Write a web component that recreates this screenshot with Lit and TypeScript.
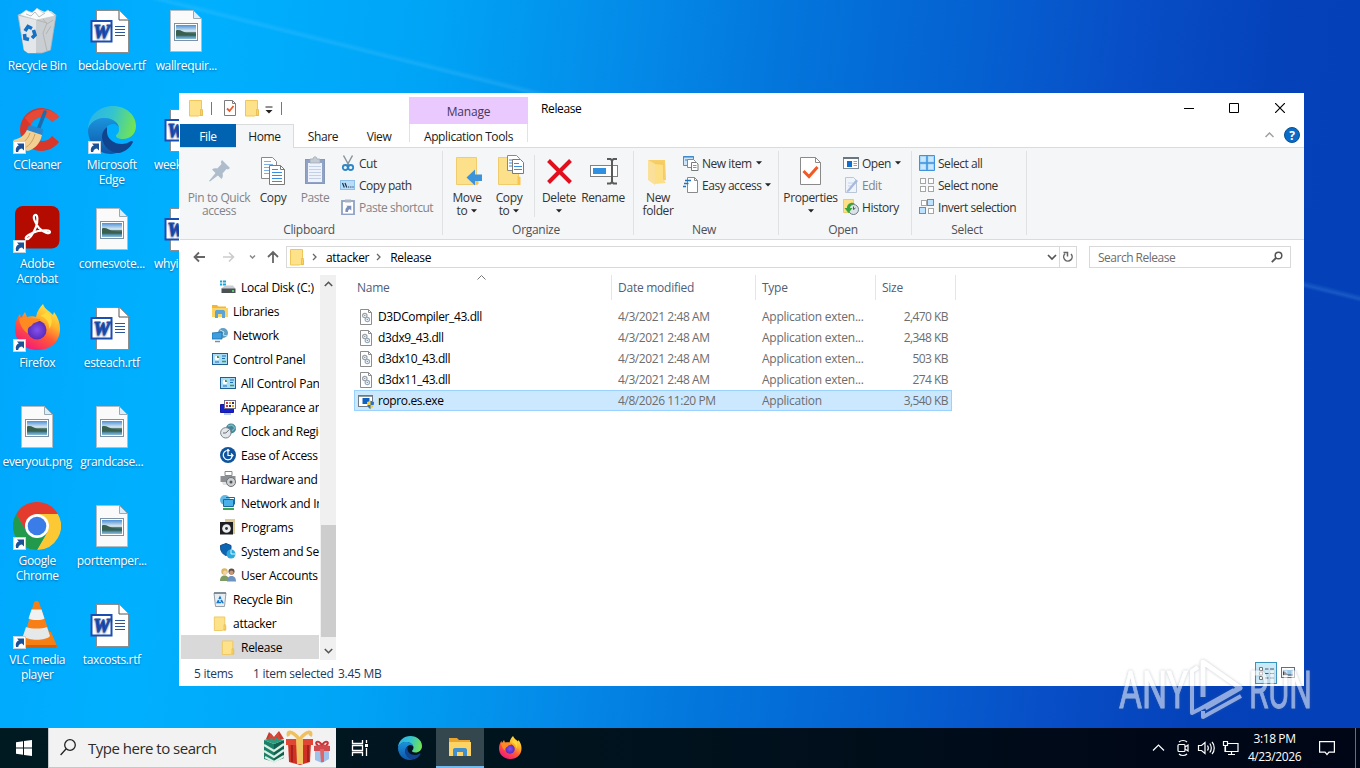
import { LitElement, html, svg, css, nothing } from 'lit'
import { customElement, property } from 'lit/decorators.js'
import { classMap } from 'lit/directives/class-map.js'

/* ---------- icons ---------- */

const pic = (w: number, h: number, body: unknown, vw = w, vh = h) => html`
  <svg width=${w} height=${h} viewBox="0 0 ${vw} ${vh}" fill="none">${body}</svg>
`

const shortcut = svg`
  <rect x="0.5" y="35.5" width="12" height="12" fill="#fff" stroke="#c9d3dc"/>
  <path d="M3 46c-.8-3.500.5-5.800 2.800-6.500L4 37.500h7v7l-2-2c-2 .2-3.500 1.200-3.800 3.500z" fill="#1b5297"/>
`

const wordFile = pic(48, 48, svg`
  <path d="M8.500 3.500h23l9 9v33h-32z" fill="#fff" stroke="#8d8d8d"/>
  <path d="M31 3.500v9.500h9.500" fill="#fff" stroke="#555"/>
  <path d="M27 19.500h10M27 22.500h10M27 25.500h10M27 28.500h10" stroke="#2b579a"/>
  <rect x="3.500" y="14" width="20" height="20.500" fill="#fff" stroke="#1c4eb1" stroke-width="2"/>
  <text x="13.500" y="30.500" text-anchor="middle" textLength="16" lengthAdjust="spacingAndGlyphs" font-family="Liberation Serif, serif" font-size="18" font-weight="700" font-style="italic" fill="#1c4eb1" stroke="#1c4eb1" stroke-width="1">W</text>
`)

const imageFile = pic(48, 48, svg`
  <defs>
    <linearGradient id="sky" x2="0" y2="1"><stop stop-color="#4d8fd6"/><stop offset=".45" stop-color="#dcebf3"/><stop offset=".55" stop-color="#4a7164"/><stop offset=".7" stop-color="#2d6478"/><stop offset="1" stop-color="#8cc0dd"/></linearGradient>
  </defs>
  <path d="M8.500 3.500h23l8 8v33h-31z" fill="#fafafa" stroke="#b4bcc1"/>
  <path d="M31.500 3.500v8h8z" fill="#d9eefa" stroke="#9aa9b2"/>
  <rect x="12.500" y="16.500" width="23" height="17" fill="#fff" stroke="#7b91a5"/>
  <rect x="14" y="18" width="20" height="14" fill="url(#sky)"/>
  <path d="M14 23.500c4-1.500 7 1.500 10 2.500l10 1.500v1H14z" fill="#39604f"/>
`)

const recycleBin = pic(48, 48, svg`
  <path d="M5 8l8-4 6 1 6-3 7 3 6-1 5 4-6 35-8 3H15l-4-3z" fill="#dfe3e6"/>
  <path d="M5 8l19 4 19-4-5.500 35-9 3H15l-4-3z" fill="#c9ced2" stroke="#aab3b9" stroke-width=".8"/>
  <path d="M6 9l17 4v33h-8l-4-3z" fill="#e4e7ea"/>
  <path d="M7 8l6-5 6 3 5-5 6 5 5-3 7 6-18 4z" fill="#fafbfb" stroke="#bcc4c9" stroke-width=".6"/>
  <path d="M13 7l5 2 4-4 4 5 6-4" stroke="#a7b0b7" stroke-width=".8"/>
  <path d="M24 13l10 3-4 10 4 18M30 12l4 5 6-4M33 27l5-8" stroke="#b5b4b0" stroke-width="1"/>
  <g stroke="#1571c4" stroke-width="3.600"><path d="M12 24l3-4.500 4 2"/><path d="M20.500 23l1.500 5-3 3"/><path d="M16 32.500l-4-1-.5-4.500"/></g>
`)

const ccleaner = pic(48, 48, svg`
  <path d="M46 11A21.500 21.500 0 1 0 46 36L39 30A12 12 0 1 1 39 16z" fill="#d8372a"/>
  <path d="M46 11A21.500 21.500 0 0 0 12 12l6 7A12 12 0 0 1 39 16z" fill="#f0563f" opacity=".6"/>
  <path d="M32 6L25 24" stroke="#1d6dad" stroke-width="3.500" stroke-linecap="round"/>
  <path d="M16 19l14 4-1 8-16-6z" fill="#2b86cb"/>
  <path d="M14 24l15 5c-2 9-8 15-15 16L0 34c6-1 11-4 14-10z" fill="#f2cf93"/>
  <path d="M17 27c-2 6-6 9-10 12M22 28c-2 7-5 11-10 14" stroke="#cf9f59"/>
  ${shortcut}
`)

const edgeBody = svg`
  <defs>
    <linearGradient id="eg1" x1="0" y1=".2" x2="1" y2=".4"><stop stop-color="#2ab3ea"/><stop offset=".5" stop-color="#34c4cf"/><stop offset="1" stop-color="#70e356"/></linearGradient>
    <linearGradient id="eg2" x1="0" y1="0" x2="0" y2="1"><stop stop-color="#1b93dc"/><stop offset="1" stop-color="#0d55a8"/></linearGradient>
  </defs>
  <path d="M0 24C0 9 12 0 25 0c13 0 23 9 23 20 0 8-6 13-13 13-5 0-7-2-7-3 0-2 3-2 3-7 0-6-7-11-14-11C8 12 1 18 0 24z" fill="url(#eg1)"/>
  <path d="M0 24c1-7 8-12 16-12 8 0 15 4 15 11 0-3-3-5-6-5-5 0-10 5-10 12 0 9 8 16 17 15-3 2-6 3-9 3C10 48 0 37 0 24z" fill="url(#eg2)"/>
  <path d="M19 21c-4 3-5 7-5 11 1 8 8 15 17 15 6-1 12-6 14-11 0-1-1-1-2-1-3 2-6 3-9 3-9 0-15-6-15-12z" fill="#10448e"/>
`

const acrobat = pic(48, 48, svg`
  <rect x="2" y="1" width="44.500" height="42.500" rx="8" fill="#b30b00"/>
  <path d="M22 10c3-1 3 6 1 12-3 7-7 13-10 12-2-2 5-6 12-8 6-1 12-1 12 1 0 3-7 0-11-4-4-5-7-12-4-13z" stroke="#fff" stroke-width="2.200"/>
  ${shortcut}
`)

const firefoxBody = svg`
  <defs>
    <linearGradient id="ff1" x1=".85" y1="0" x2=".25" y2="1"><stop stop-color="#fff04a"/><stop offset=".35" stop-color="#ffb32a"/><stop offset=".6" stop-color="#ff5a36"/><stop offset="1" stop-color="#f3137f"/></linearGradient>
    <radialGradient id="ff2"><stop stop-color="#8450f0"/><stop offset="1" stop-color="#5a2bb8"/></radialGradient>
  </defs>
  <path d="M30 0c2 6 7 7 10 11l1-3c4 5 6 11 6 17 0 12-9 21-22 21C11 46 2 37 2 25c0-7 2-11 5-15l1 4 4-6 2 5c3-1 7-1 9 0 1-6 4-10 7-13z" fill="url(#ff1)"/>
  <circle cx="24" cy="26" r="9.500" fill="url(#ff2)"/>
  <path d="M6 15c4-3 8-2 10-1l11 1c0 3-4 3-6 4-2 1-2 3-4 3.500-2 1-3 4-2 7-4-2-8-8-9-14.500z" fill="#ff8a22"/>
  <path d="M27 12c6 1 10 7 9 13 5-7 3-13-2-17z" fill="#ffd93b"/>
`

const chrome = pic(48, 48, svg`
  <path d="M24 12h20.800A24 24 0 0 1 24 48l10.400-18z" fill="#fcc934"/>
  <path d="M24 12h20.800A24 24 0 0 0 3.200 12L13.600 30z" fill="#e33b2e"/>
  <path d="M3.200 12L13.600 30 24 36l10.400-6L24 48A24 24 0 0 1 3.200 12z" fill="#239a4b"/>
  <circle cx="24" cy="24" r="12" fill="#fff"/><circle cx="24" cy="24" r="9.300" fill="#3b7de8"/>
  ${shortcut}
`)

const vlc = pic(48, 48, svg`
  <path d="M12 31h26l6 14c0 1-.500 2-2 2H8c-1 0-2-1-1.500-2z" fill="#f57f12"/>
  <path d="M10 44h34l-.6 3H8z" fill="#d95f05"/>
  <path d="M21 1.500c1-2 4-2 5 0l12 35c-3 6-23 6-27 0z" fill="#f77f15"/>
  <path d="M18.500 8.500h10l3 9c-3 2-12 2-16 0z" fill="#eff1f2"/>
  <path d="M13 26c5 2 16 2 21 0l3 9c-4 5-22 5-27 0z" fill="#e6e9ea"/>
  ${shortcut}
`)

const folder = (w = 16, h = 18) => pic(w, h, svg`
  <path d="M1.500 1.500h12v10l1 1v4h-3l-1 .5h-9z" fill="#fde28a" stroke="#efc65b"/>
  <path d="M12.500 10.500h2v6h-2z" fill="#fbd35e" stroke="#e4b84d" stroke-width=".7"/>
`, 16, 18)

const qatCheck = pic(14, 16, svg`
  <path d="M1.500.5h8l3 3v12h-11z" fill="#fff" stroke="#7c7c7c"/><path d="M9.500.5v3h3" stroke="#7c7c7c"/>
  <path d="M4 8.500l2.500 2.500 4-5" stroke="#e8592b" stroke-width="1.800"/>
`)

const caret = html`<svg class="caret" width="6" height="4" viewBox="0 0 6 4"><path d="M0 .3h6L3 3.600z" fill="#222"/></svg>`

const big = {
  pin: pic(32, 32, svg`<g transform="translate(6 5)" fill="#aebccb"><path d="M13 0l8 8-2 1.500-1.500-.5-4 4.500c.8 2 .3 4-1 5.500L3 9.500c1.500-1.300 3.500-1.600 5.300-1L12.500 4 11.800 2z"/><path d="M7 12.500l2.500 2.500L1 21.500l-1-.5z"/></g>`),
  copy: pic(32, 32, svg`
    <path d="M4.500 2.500h11l4 4v17h-15z" fill="#fff" stroke="#8a8a8a"/><path d="M7 6.500h7M7 9.500h9M7 12.500h9M7 15.500h9M7 18.500h9" stroke="#7eb0e4"/>
    <path d="M12.500 10.500h11l4 4v15h-15z" fill="#fff" stroke="#7a7a7a"/><path d="M23.500 10.500v4h4" stroke="#7a7a7a"/>
    <path d="M15 14.500h6M15 17.500h10M15 20.500h10M15 23.500h10M15 26.500h10" stroke="#3a8ee0"/>
  `),
  paste: pic(32, 32, svg`
    <rect x="6.500" y="4.500" width="19" height="24" fill="#90a3c6" stroke="#8799b6"/><rect x="9" y="8" width="14" height="19" fill="#eef3fb"/>
    <path d="M11 4h3c0-3 4-3 4 0h3v4H11z" fill="#c3cad3" stroke="#9ca7b4" stroke-width=".7"/>
    <path d="M10 11.500h12M10 14.500h12M10 17.500h12M10 20.500h12M10 23.500h12" stroke="#c3d0e6"/>
  `),
  move: pic(32, 32, svg`
    <path d="M5.500 2.500h20v20l1 1v6h-21z" fill="#fde08a" stroke="#f1cc6c"/><path d="M24.500 20v9h3V21z" fill="#f7c64e"/>
    <path d="M15.500 22.500l8.500-8v5h7v6.500h-7v4.500z" fill="#3b93dc"/>
  `),
  copyTo: pic(32, 32, svg`
    <path d="M5.500 2.500h20v27h-20z" fill="#fde08a" stroke="#f1cc6c"/><path d="M24.500 21v9h3V22z" fill="#f7c64e"/>
    <path d="M14.500.5h9l3 3v12h-12z" fill="#fff" stroke="#8a8a8a"/><path d="M16 5h5M16 8h5M16 11h5" stroke="#3a8ee0"/>
    <path d="M19.500 4.500h8l3 3v11h-11z" fill="#fff" stroke="#7a7a7a"/><path d="M21 8.500h5M21 11.500h8M21 14.500h8" stroke="#3a8ee0"/>
  `),
  del: pic(32, 32, svg`<path d="M5.500 5.500l22 22M27.500 5.500l-22 22" stroke="#e0101f" stroke-width="4"/>`),
  rename: pic(32, 32, svg`
    <rect x="3.500" y="10.500" width="27" height="11" fill="#fff" stroke="#808080"/><rect x="6" y="13" width="13" height="6" fill="#2f8fe0"/>
    <path d="M20 4h3.500l1.500 1.500L26.500 4H30M25 5v22M20 28.500h3.500L25 27l1.500 1.500H30" stroke="#5a5a5a" stroke-width="2"/>
  `),
  newFolder: pic(32, 32, svg`
    <path d="M6 5h17l1 20-5 1z" fill="#f7cf68"/><path d="M6 5l7 4v21l-7-5z" fill="#fbe099"/><path d="M13 7h9v18l-9 3z" fill="#f6cc62"/><path d="M13 9l8 1v14l3 4-11 1z" fill="#fddf85"/>
  `),
  props: pic(32, 32, svg`
    <path d="M5.500 2.500h15l5 5v22h-20z" fill="#fff" stroke="#8a8a8a"/><path d="M20.500 2.500v5h5" stroke="#8a8a8a"/>
    <path d="M8.500 16l5.500 5.500 8.500-9.500" stroke="#f15a24" stroke-width="3"/>
  `)
}

const sq = (x: number, y: number, on: boolean) => svg`<rect x=${x} y=${y} width=${on ? 6 : 5} height=${on ? 6 : 5} fill=${on ? '#bfe2ff' : '#fff'} stroke=${on ? '#3f9be6' : '#a6a6a6'}/>`

const small = {
  cut: pic(16, 16, svg`<path d="M3.500.5l5.500 10M12.500.5L7 10.500" stroke="#8a949c" stroke-width="1.500"/><circle cx="5.300" cy="12.500" r="2.500" stroke="#2d87c8" stroke-width="1.800"/><circle cx="10.700" cy="12.500" r="2.500" stroke="#2d87c8" stroke-width="1.800"/>`),
  path: pic(16, 16, svg`<rect x=".5" y="3.500" width="14" height="9" fill="#b9ddf8" stroke="#8dbfe8"/><path d="M2.500 6l1.800 4.500M5 6l1.800 4.500" stroke="#17324d" stroke-width="1.200"/><path d="M8 10h1.200M10.200 10h1.200M12.400 10h1.200" stroke="#17324d" stroke-width="1.200"/>`),
  pasteShortcut: pic(16, 16, svg`<rect x="2" y="2" width="12" height="13.500" fill="#fff" stroke="#8fa1c4" stroke-width="1.800"/><path d="M5 .5h6v3H5z" fill="#a9b3c4"/><path d="M5.500 13c-.5-3 .5-4.500 2-5L6.300 6.800h5v5L10 10.300C8.500 10.500 8 11.500 8 13z" fill="#7c8fb8"/>`),
  newItem: pic(16, 16, svg`<path d="M.5 1.500h10v9H.5z" fill="#cfe4f6" stroke="#4a90cf"/><path d="M0 2h11M2 5h3" stroke="#3b82c4"/><path d="M4.500 4.500h6l2 2v6h-8z" fill="#fff" stroke="#7c8a96"/><path d="M8.500 7.500h5l1.500 1.500v6.500H8.500z" fill="#fff" stroke="#7a7a7a"/><path d="M10 10.500h3.500M10 12.500h3.500" stroke="#57a0df"/>`),
  easy: pic(16, 16, svg`<path d="M4.500.5h7l3 3v12h-10z" fill="#fff" stroke="#8a8a8a"/><path d="M11.500.5v3h3" stroke="#8a8a8a"/><path d="M2 3.500h6M1 6.500h4.500M0 9.500h3" stroke="#2372ba" stroke-width="1.500"/>`),
  open: pic(16, 16, svg`<rect x=".5" y="2.500" width="15" height="11" fill="#fff" stroke="#7f8b96"/><path d="M0 3h16" stroke="#6a7680" stroke-width="2"/><rect x="4" y="6" width="5" height="6" fill="#0e6fd0"/><path d="M10.500 6.500h3.500M10.500 8.500h3.500M10.500 10.500h3.500" stroke="#8fa3b5"/>`),
  edit: pic(16, 16, svg`<path d="M2.500.5h8l3 3v12h-11z" fill="#eff4fb" stroke="#b9c6da"/><path d="M5 6h5M5 9h4" stroke="#c6d4e8"/><path d="M4 13.500L13 2.500l2 1.500-9 10.500-2.500.5z" fill="#a8badb"/>`),
  history: pic(16, 16, svg`<path d="M.5.500h10v13h-10z" fill="#fddf85" stroke="#eccb6a"/><circle cx="10.500" cy="10.500" r="5" fill="#dbe3e8" stroke="#6d7b86"/><path d="M10.500 7.500v3l2-1.500" stroke="#555"/><path d="M12 4.500C8 2.500 4 5 4 9H1.500l4 5 4-5H7c0-2 2-4 5-4.500z" fill="#35a63c"/>`),
  all: pic(16, 16, svg`<path d="M.5.5h15v15H.5z" fill="#a6d5fb" stroke="#3f93dc"/><path d="M8 .500v15M.5 8h15" stroke="#3f93dc" stroke-width="1.500"/><path d="M2 2h4.500v4.500H2zM9.500 2H14v4.500H9.500zM2 9.500h4.500V14H2zM9.500 9.500H14V14H9.500z" fill="#c9e7ff"/>`),
  none: pic(16, 16, svg`${sq(1.500, 1.500, false)}${sq(9.500, 1.500, false)}${sq(1.500, 9.500, false)}${sq(9.500, 9.500, false)}`),
  invert: pic(16, 16, svg`${sq(2.500, 1.500, false)}${sq(8.500, .5, true)}${sq(.5, 8.500, true)}${sq(9.500, 9.500, false)}`)
}

const cpl = svg`
  <rect x=".5" y="2.500" width="15" height="11" fill="#a9dcf7" stroke="#215f93"/>
  <circle cx="5" cy="7" r="2.300" fill="#fff"/><path d="M5 7V4.700A2.300 2.300 0 0 1 7.300 7z" fill="#3a9a55"/><path d="M3 11h4M10 5h4M10 7.500h3" stroke="#1c6cb4"/><path d="M10 10.500h4" stroke="#3d9b47" stroke-width="1.500"/>
`

const nav = {
  disk: pic(16, 16, svg`<path d="M0 1.500h2.200v2H0zM3 1.500h3v2H3zM0 4.500h2.200v2H0zM3 4.500h3v2H3z" fill="#18a5d8"/><path d="M3 8l2-1.500h8l2 2.500v1H1z" fill="#c9ced2"/><rect x="1.500" y="9.500" width="14" height="4.500" fill="#4b5054"/><circle cx="13" cy="12" r="1" fill="#5ff06d"/>`),
  lib: pic(16, 16, svg`<path d="M0 2h5l1.500 1.500H14v9H0z" fill="#f4b733"/><path d="M0 5h16v9H0z" fill="#fdd464"/><path d="M3 15V9c0-1.500 1-2 2-2h6c1 0 2 .5 2 2v6h-3v-4H6v4z" fill="#5ba4d8"/>`),
  net: pic(16, 16, svg`<circle cx="11" cy="6" r="5" fill="#5e9fc2"/><path d="M8 3l4 2-1 3 4 1" stroke="#c3e2ee"/><path d="M0 6l10-1v7L0 12z" fill="#3e9fe0" stroke="#1c6ca8" stroke-width=".8"/><path d="M3 14.500h5" stroke="#7292a6" stroke-width="1.500"/>`),
  cpl: pic(16, 16, cpl),
  look: pic(16, 16, svg`<path d="M.5 5.500h13v8H.5z" fill="#1420d8" stroke="#18189c"/><rect x="4.500" y="1.500" width="11" height="8" fill="#fff" stroke="#6f6f8f"/><path d="M6 4h2M6 7h2" stroke="#d33" stroke-width="2"/><path d="M9 4h2M12 7h2" stroke="#e9a020" stroke-width="2"/><path d="M12 4h2M9 7h2" stroke="#335" stroke-width="2"/><path d="M4 15h7" stroke="#6a9ad0"/>`),
  clock: pic(16, 16, svg`<circle cx="11" cy="5.500" r="5" fill="#3f8796"/><path d="M8 3l4-1 3 3-3 3" stroke="#7fb5c4" stroke-width="1.300"/><circle cx="5.800" cy="9.800" r="5.200" fill="#e3e7ea" stroke="#7b868e"/><path d="M5.800 10l3-3M5.800 10H3" stroke="#667"/>`),
  ease: pic(16, 16, svg`<circle cx="8" cy="8" r="8" fill="#0f549e"/><path d="M6 3.800A4.600 4.600 0 0 0 4 10.500a4.600 4.600 0 0 0 8 0M8 2v6.500h5M11 6.500l2 2-2 2M6.500 4L8 2.500 9.500 4" stroke="#fff" stroke-width="1.200"/>`),
  hw: pic(16, 16, svg`<path d="M5 .5h7v4H5z" fill="#fff" stroke="#888"/><path d="M.5 5h15v6H.5z" fill="#8c9094"/><path d="M2 11h8v3H3z" fill="#dfe1e3"/><circle cx="11" cy="11" r="4.500" fill="#cdd0d3" stroke="#6c7074"/><circle cx="11" cy="11" r="1.500" fill="#555"/>`),
  web: pic(16, 16, svg`<circle cx="5" cy="5" r="5" fill="#62b7e3"/><path d="M3.500 4.500h10v7h-10z" fill="#48b1ea" stroke="#1a699f"/><path d="M6 2.500h8.500v7" stroke="#1a699f"/><path d="M3 14h11" stroke="#36a853" stroke-width="2"/>`),
  prog: pic(16, 16, svg`<path d="M5 0h10v15H5z" fill="#dcca98"/><rect x="0" y="3" width="13" height="12.500" fill="#1e1e22"/><circle cx="6.500" cy="9.500" r="4.300" fill="#e9edf0"/><circle cx="6.500" cy="9.500" r="1.400" fill="#333"/>`),
  sec: pic(16, 16, svg`<path d="M.5 2.500L6 .500l5 2c.3 5-1 8-5 10C2 11 0 7 .5 2.500z" fill="#0c66b4" stroke="#0b4e8e"/><circle cx="11" cy="11" r="4.500" fill="#2baade"/><path d="M11 6.500V11h4.500" stroke="#dff4fb"/>`),
  users: pic(16, 16, svg`<circle cx="4.500" cy="4.500" r="3.200" fill="#d8b75f"/><circle cx="5" cy="5.500" r="2" fill="#f2d2ae"/><path d="M0 14c0-4 2-5.500 4.500-5.500S9 10 9 14z" fill="#7d9c62"/><circle cx="11.500" cy="4.500" r="3" fill="#5d4a40"/><circle cx="11.500" cy="5.700" r="2.200" fill="#c99776"/><path d="M7 14.500c0-4 2-5.500 4.500-5.500s4.500 1.500 4.500 5.500z" fill="#6f93c0"/>`),
  bin: pic(14, 16, svg`<path d="M1 2h12l-1.500 13.500h-9z" fill="#e8edf1" stroke="#93a0aa"/><path d="M1 2h12" stroke="#6d7880" stroke-width="1.500"/><path d="M4.500 11.500h5L7 6.500z" stroke="#1677c8" stroke-width="1.700" stroke-dasharray="3.500 1"/>`),
  folder: folder(14, 17)
}

const dll = pic(14, 16, svg`
  <path d="M1.500.5h8l3 3v12h-11z" fill="#fff" stroke="#8d8d8d"/><path d="M9.500.5v3h3" stroke="#8d8d8d"/>
  <circle cx="5.800" cy="6.500" r="2.200" stroke="#9aa3ab" stroke-width="1.200"/><circle cx="8.300" cy="10.500" r="2.200" stroke="#94abc0" stroke-width="1.200"/><circle cx="5.800" cy="6.500" r=".7" fill="#888"/><circle cx="8.300" cy="10.500" r=".7" fill="#888"/>
`)

const exe = pic(16, 16, svg`
  <rect x=".5" y="2.500" width="14" height="11" fill="#fff" stroke="#707a82"/><path d="M0 3h15" stroke="#707a82" stroke-width="1.500"/>
  <rect x="4.500" y="5" width="7" height="6" fill="#0e62c0"/>
  <path d="M9 9l3.500-1.200L16 9c0 3.500-1 5.500-3.500 7C10 14.500 9 12.500 9 9z" fill="#f6cf35"/><path d="M12.500 7.800L16 9c0 1.200-.1 2-.4 3h-3.100zM12.500 12v4C10.600 15 9.700 13.500 9.300 12z" fill="#2a70c9"/>
`)

/* ---------- desktop icon ---------- */

@customElement('desktop-icon')
export class DesktopIcon extends LitElement {
  static styles = css`
    :host {
      display: flex;
      flex-direction: column;
      align-items: center;
      padding-top: 7px;
      color: #fff;
      font: 12px/15px "Open Sans", "Noto Sans", sans-serif;
      letter-spacing: -0.35px;
      text-align: center;
      text-shadow: 0 1px 2px rgba(0, 30, 80, .5);
    }

    svg {
      display: block;
      flex: none;
    }

    .label {
      white-space: pre;
      margin-top: 3px;
    }

    .clip {
      align-self: flex-start;
      padding-left: 5px;
    }
  `

  @property({ attribute: false }) icon: unknown
  @property() label = ''
  @property({ type: Boolean }) covered = false

  render () {
    return html`
      ${this.icon}
      <div class=${classMap({ label: true, clip: this.covered })}>${this.label}</div>
    `
  }
}

/* ---------- explorer ---------- */

const NAV_ITEMS: [string, unknown, number, boolean?][] = [
  ['Local Disk (C:)', nav.disk, 2],
  ['Libraries', nav.lib, 1],
  ['Network', nav.net, 1],
  ['Control Panel', nav.cpl, 1],
  ['All Control Panel Items', nav.cpl, 2],
  ['Appearance and Personalization', nav.look, 2],
  ['Clock and Region', nav.clock, 2],
  ['Ease of Access', nav.ease, 2],
  ['Hardware and Sound', nav.hw, 2],
  ['Network and Internet', nav.web, 2],
  ['Programs', nav.prog, 2],
  ['System and Security', nav.sec, 2],
  ['User Accounts', nav.users, 2],
  ['Recycle Bin', nav.bin, 1],
  ['attacker', nav.folder, 1],
  ['Release', nav.folder, 2, true]
]

const FILES = [
  { name: 'D3DCompiler_43.dll', date: '4/3/2021 2:48 AM', type: 'Application exten...', size: '2,470 KB' },
  { name: 'd3dx9_43.dll', date: '4/3/2021 2:48 AM', type: 'Application exten...', size: '2,348 KB' },
  { name: 'd3dx10_43.dll', date: '4/3/2021 2:48 AM', type: 'Application exten...', size: '503 KB' },
  { name: 'd3dx11_43.dll', date: '4/3/2021 2:48 AM', type: 'Application exten...', size: '274 KB' },
  { name: 'ropro.es.exe', date: '4/8/2026 11:20 PM', type: 'Application', size: '3,540 KB', selected: true }
]

@customElement('explorer-window')
export class ExplorerWindow extends LitElement {
  static styles = css`
    :host {
      display: flex;
      flex-direction: column;
      box-sizing: border-box;
      background: #fff;
      color: #1a1a1a;
      font: 12px/15px "Open Sans", "Noto Sans", sans-serif;
      letter-spacing: -0.38px;
      white-space: nowrap;
      padding-left: 1px;
    }

    svg { display: block; flex: none; }

    .title { display: flex; height: 31px; }
    .quick { display: flex; align-items: center; width: 229px; box-sizing: border-box; padding: 0 0 1px 8px; }
    .quick .bar { width: 1px; height: 13px; background: #777; }
    .quick .bar1 { margin: 0 11px 0 7px; }
    .quick .f2 { margin-left: 7px; }
    .quick .drop { margin: 3px 7px 0 4px; }
    .manage { width: 119px; height: 27px; margin-top: 4px; background: #e9c9fe; color: #47365a; line-height: 29px; text-align: center; letter-spacing: -0.2px; }
    .caption { flex: 1; padding-left: 13px; line-height: 32px; color: #000; }
    .controls { display: flex; width: 138px; height: 30px; }
    .controls div { width: 45.500px; display: grid; place-items: center; }

    .tabs { display: flex; height: 23px; line-height: 25px; text-align: center; border-bottom: 1px solid #dadbdc; }
    .file { width: 56px; background: #0063b1; color: #fff; }
    .home { width: 58px; height: 24px; background: #f5f6f7; border: solid #dadbdc; border-width: 1px 1px 0 0; line-height: 23px; box-sizing: border-box; }
    .share { width: 58px; }
    .view { width: 57px; padding-right: 0; }
    .view span { margin-right: 3px; }
    .apptools { width: 117px; border: solid #e2e2e2; border-width: 0 1px; height: 18px; }
    .tabend { flex: 1; display: flex; justify-content: flex-end; align-items: center; padding: 0 4px 2px 0; gap: 10px; }

    .ribbon { display: flex; height: 91px; background: #f5f6f7; border-bottom: 1px solid #dadbdc; color: #333; letter-spacing: -0.46px; }
    .group { display: flex; flex-direction: column; box-sizing: border-box; padding: 4px 0 0 var(--pad); border-right: 1px solid #dfe1e3; margin: 3px 0 4px; }
    .tools { display: flex; height: 70px; }
    .group .name { text-align: center; height: 15px; margin: 3px 4px -2px calc(-1 * var(--pad)); color: #4d5156; letter-spacing: -0.3px; }
    .big { display: flex; flex-direction: column; align-items: center; text-align: center; line-height: 13px; }
    .big span { display: block; margin-top: 4px; white-space: pre; letter-spacing: -0.38px; }
    .big svg.caret, .row svg.caret { display: inline-block; vertical-align: 2px; margin-left: 4px; }
    .big > svg.caret { margin: 5px 0 0; }
    .off { color: #828488; }
    .rows { display: flex; flex-direction: column; margin-top: -3px; }
    .row { display: flex; align-items: center; height: 22px; gap: 3px; }
    .row svg.caret { margin-left: 1px; }
    .clipboard { width: 263px; --pad: 4px; }
    .organize { width: 191px; --pad: 3px; }
    .new { width: 145px; --pad: 6px; }
    .open { width: 133px; --pad: 3px; }
    .select { width: 115px; --pad: 7px; }
    .w38 { width: 38px; } .w42 { width: 42px; } .w70 { width: 70px; } .w46 { width: 46px; } .w50 { width: 50px; } .w36 { width: 36px; } .w57 { width: 57px; }
    .split { width: 1px; height: 62px; background: #dfe1e3; margin: 0 5px 0 4px; }
    .beside2 { margin-left: 2px; } .beside4 { margin-left: 4px; } .beside7 { margin-left: 7px; }

    .address { display: flex; height: 22px; padding: 6px 13px 0 0; }
    .arrows { display: flex; width: 106px; align-items: center; box-sizing: border-box; padding-left: 13px; }
    .crumbs { display: flex; align-items: center; width: 791px; box-sizing: border-box; border: 1px solid #d9d9d9; padding-left: 2px; color: #000; letter-spacing: -0.3px; }
    .crumbs .sep { width: 5px; margin: 0 9px 0 7px; }
    .crumbs .end { flex: 1; }
    .refresh { width: 16px; height: 20px; display: grid; place-items: center; border-left: 1px solid #d9d9d9; margin-left: 2px; }
    .search { display: flex; justify-content: space-between; align-items: center; width: 202px; box-sizing: border-box; border: 1px solid #d9d9d9; margin-left: 12px; padding: 0 7px 0 8px; color: #6d6d6d; letter-spacing: -0.5px; }

    .main { display: flex; height: 385px; margin-top: 7px; }
    .tree { width: 138px; overflow: hidden; color: #000; letter-spacing: -0.27px; padding-left: 1px; }
    .node { display: flex; align-items: center; gap: 5px; height: 24px; }
    .node i { width: 16px; display: grid; place-items: center; }
    .d1 { padding-left: 31px; }
    .d2 { padding-left: 39px; }
    .current { background: #d9d9d9; }
    .scroll { display: flex; flex-direction: column; justify-content: space-between; align-items: center; width: 16px; background: #f0f0f0; height: 385px; margin-left: 1px; }
    .scroll svg { margin: 6px 0; }
    .thumb { width: 15px; height: 112px; background: #cdcdcd; margin: auto 0 5px; }
    .list { padding-left: 18px; }
    .head { display: flex; color: #4c607a; height: 25px; line-height: 26px; letter-spacing: -0.25px; }
    .head div { box-sizing: border-box; border-right: 1px solid #e5e5e5; position: relative; padding-left: 6px; }
    .head .sort { position: absolute; left: 123px; top: 0; }
    .body { margin-top: 6px; }
    .entry { display: flex; align-items: center; height: 21px; width: 598px; box-sizing: border-box; color: #6d6d6d; border: 1px solid transparent; }
    .entry i { width: 16px; margin: 0 4px 0 3px; display: grid; place-items: center; }
    .entry.sel { background: #cce8ff; border-color: #99d1ff; }
    .n { width: 240px; color: #000; } .d { width: 144px; letter-spacing: -0.42px; } .t { width: 120px; letter-spacing: -0.25px; } .s { width: 66px; text-align: right; letter-spacing: -0.55px; }
    .list .head .c1 { width: 258px; padding-left: 3px; } .c2 { width: 144px; } .c3 { width: 120px; } .c4 { width: 80px; }

    .status { display: flex; align-items: center; flex: 1; padding: 0 9px 0 14px; color: #1e395b; letter-spacing: -0.27px; }
    .status .count { width: 59px; }
    .status .picked { width: 85px; }
    .modes { display: flex; align-items: center; gap: 4px; margin-left: auto; }
  `

  bigButton (icon: unknown, label: unknown, cls: string) {
    return html`<div class="big ${cls}">${icon}<span>${label}</span></div>`
  }

  row (icon: unknown, label: string, opts: { off?: boolean, menu?: boolean } = {}) {
    return html`<div class=${classMap({ row: true, off: !!opts.off })}>${icon}<span>${label}</span>${opts.menu ? caret : nothing}</div>`
  }

  renderTitle () {
    return html`
      <div class="title">
        <div class="quick">
          ${folder()}<div class="bar bar1"></div>${qatCheck}
          <div class="f2">${folder()}</div>
          <div class="drop">${pic(10, 8, svg`<path d="M1.500 1h7" stroke="#222"/><path d="M1.500 4h7L5 7.500z" fill="#222"/>`)}</div>
          <div class="bar"></div>
        </div>
        <div class="manage">Manage</div>
        <div class="caption">Release</div>
        <div class="controls">
          <div>${pic(10, 11, svg`<path d="M0 5.500h10" stroke="#000"/>`)}</div>
          <div>${pic(10, 10, svg`<path d="M.5.500h9v9h-9z" stroke="#000"/>`)}</div>
          <div>${pic(10, 10, svg`<path d="M0 0l10 10M10 0L0 10" stroke="#000" stroke-width="1.200"/>`)}</div>
        </div>
      </div>
      <div class="tabs">
        <div class="file">File</div><div class="home">Home</div>
        <div class="share">Share</div><div class="view"><span>View</span></div>
        <div class="apptools">Application Tools</div>
        <div class="tabend">
          ${pic(9, 6, svg`<path d="M.5 5l4-4 4 4" stroke="#a0a0a0" stroke-width="1.500"/>`)}
          ${pic(16, 16, svg`<circle cx="8" cy="8" r="7.500" fill="#0a6cc8" stroke="#09518f"/><text x="8" y="12.500" text-anchor="middle" font-size="12" font-weight="700" fill="#fff">?</text>`)}
        </div>
      </div>
    `
  }

  renderRibbon () {
    return html`
      <div class="ribbon">
        <div class="group clipboard">
          <div class="tools">
            ${this.bigButton(big.pin, 'Pin to Quick\naccess', 'w70 off')}
            ${this.bigButton(big.copy, 'Copy', 'w38')}
            ${this.bigButton(big.paste, 'Paste', 'w46 off')}
            <div class="rows beside2">
              ${this.row(small.cut, 'Cut')}
              ${this.row(small.path, 'Copy path')}
              ${this.row(small.pasteShortcut, 'Paste shortcut', { off: true })}
            </div>
          </div>
          <div class="name">Clipboard</div>
        </div>
        <div class="group organize">
          <div class="tools">
            ${this.bigButton(big.move, html`Move<br>to${caret}`, 'w42')}
            ${this.bigButton(big.copyTo, html`Copy<br>to${caret}`, 'w42')}
            <div class="split"></div>
            <div class="big w38">${big.del}<span>Delete</span>${caret}</div>
            ${this.bigButton(big.rename, 'Rename', 'w50')}
          </div>
          <div class="name">Organize</div>
        </div>
        <div class="group new">
          <div class="tools">
            ${this.bigButton(big.newFolder, 'New\nfolder', 'w36')}
            <div class="rows beside7">
              ${this.row(small.newItem, 'New item', { menu: true })}
              ${this.row(small.easy, 'Easy access', { menu: true })}
            </div>
          </div>
          <div class="name">New</div>
        </div>
        <div class="group open">
          <div class="tools">
            <div class="big w57">${big.props}<span>Properties</span>${caret}</div>
            <div class="rows beside4">
              ${this.row(small.open, 'Open', { menu: true })}
              ${this.row(small.edit, 'Edit', { off: true })}
              ${this.row(small.history, 'History')}
            </div>
          </div>
          <div class="name">Open</div>
        </div>
        <div class="group select">
          <div class="tools">
            <div class="rows">
              ${this.row(small.all, 'Select all')}
              ${this.row(small.none, 'Select none')}
              ${this.row(small.invert, 'Invert selection')}
            </div>
          </div>
          <div class="name">Select</div>
        </div>
      </div>
    `
  }

  renderAddress () {
    const sep = html`<div class="sep">${pic(5, 8, svg`<path d="M1 1l3 3-3 3" stroke="#666" stroke-width="1.300"/>`)}</div>`
    return html`
      <div class="address">
        <div class="arrows">
          ${pic(92, 14, svg`
            <path d="M12 7H1.500M6 2.500L1.500 7 6 11.500" stroke="#666" stroke-width="1.800"/>
            <path d="M30 7h10.500M36 2.500L40.500 7 36 11.500" stroke="#ccc" stroke-width="1.600"/>
            <path d="M57 5.500l2.500 2.500L62 5.500" stroke="#888" stroke-width="1.500"/>
            <path d="M80 13V2M75 7l5-5 5 5" stroke="#666" stroke-width="1.800"/>
          `)}
        </div>
        <div class="crumbs">
          ${folder()}${sep}attacker${sep}Release
          <div class="end"></div>
          ${pic(10, 7, svg`<path d="M1 1l4 4 4-4" stroke="#555" stroke-width="1.700"/>`)}
          <div class="refresh">${pic(12, 12, svg`<path d="M3 2.800a4.200 4.200 0 1 0 6 .2M1.500 1.500h4v4" stroke="#666" stroke-width="1.500"/>`)}</div>
        </div>
        <div class="search">Search Release
          ${pic(12, 12, svg`<circle cx="7.500" cy="4.500" r="3.300" stroke="#555" stroke-width="1.500"/><path d="M5 7L.8 11.200" stroke="#555" stroke-width="1.800"/>`)}
        </div>
      </div>
    `
  }

  render () {
    return html`
      ${this.renderTitle()}
      ${this.renderRibbon()}
      ${this.renderAddress()}
      <div class="main">
        <div class="tree">
          ${NAV_ITEMS.map(([label, icon, depth, current]) => html`
            <div class="node d${depth} ${current ? 'current' : ''}"><i>${icon}</i>${label}</div>
          `)}
        </div>
        <div class="scroll">
          ${pic(9, 6, svg`<path d="M.8 5l3.700-3.700L8.200 5" stroke="#555" stroke-width="1.600"/>`)}
          <div class="thumb"></div>
          ${pic(9, 6, svg`<path d="M.8 1l3.700 3.700L8.200 1" stroke="#555" stroke-width="1.600"/>`)}
        </div>
        <div class="list">
          <div class="head">
            <div class="c1">Name<span class="sort">${pic(9, 5, svg`<path d="M.5 4.500l4-4 4 4" stroke="#777"/>`)}</span></div>
            <div class="c2">Date modified</div>
            <div class="c3">Type</div>
            <div class="c4">Size</div>
          </div>
          <div class="body">
            ${FILES.map(f => html`
              <div class=${classMap({ entry: true, sel: !!f.selected })}>
                <i>${f.selected ? exe : dll}</i>
                <div class="n">${f.name}</div><div class="d">${f.date}</div><div class="t">${f.type}</div><div class="s">${f.size}</div>
              </div>
            `)}
          </div>
        </div>
      </div>
      <div class="status">
        <div class="count">5 items</div>
        <div class="picked">1 item selected</div>
        <div>3.45 MB</div>
        <div class="modes">
          ${pic(22, 22, svg`<rect x=".5" y=".5" width="21" height="21" fill="#cbeaf8" stroke="#3893bd"/><path d="M4.500 5.500h3v3h-3zM4.500 10h3v3h-3zM4.500 14.500h3v3h-3z" fill="#fff" stroke="#777"/><path d="M10 7h3.500M15 7h4M10 11.500h3.500M15 11.500h4M10 16h3.500M15 16h4" stroke="#556"/>`)}
          ${pic(14, 12, svg`<rect x=".5" y=".5" width="13" height="10" fill="#fff" stroke="#666f77"/><rect x="2" y="3" width="10" height="5.500" fill="#9fd0ef"/><path d="M2 8V4.500h2L7 8z" fill="#223"/><path d="M7 8h5" stroke="#345"/>`)}
        </div>
      </div>
    `
  }
}

/* ---------- taskbar ---------- */

@customElement('task-bar')
export class TaskBar extends LitElement {
  static styles = css`
    :host {
      display: flex;
      height: 40px;
      background: linear-gradient(90deg, #001a22, #00121d 50%, #000817 85%, #000616);
      color: #fff;
      font: 12px/18px "Open Sans", "Noto Sans", sans-serif;
      letter-spacing: -0.4px;
    }

    svg { display: block; flex: none; }
    .cell { width: 48px; display: grid; place-items: center; }
    .search { display: flex; align-items: center; width: 288px; box-sizing: border-box; background: #f2f2f2; border: solid #c4c8ca; border-width: 0 0 1px 1px; color: #2c2c2c; font-size: 15px; padding: 0 4px 0 11px; letter-spacing: -0.5px; }
    .search span { flex: 1; padding-left: 12px; white-space: nowrap; }
    .buttons { display: flex; gap: 2px; }
    .active { background: #34474f; border-bottom: 2px solid #76b9ed; box-sizing: border-box; }
    .tray { display: flex; align-items: center; margin-left: auto; }
    .clock { width: 75px; box-sizing: border-box; padding-right: 14px; text-align: center; line-height: 18px; }
    .peek { align-self: stretch; width: 4px; border-left: 1px solid #66707c; margin-left: 20px; }
  `

  render () {
    return html`
      <div class="cell">${pic(16, 16, svg`<path d="M0 2.300L7 1.300v6.200H0zM8 1.100L16 0v7.500H8zM0 8.500h7v6.200l-7-1zM8 8.500h8V16l-8-1.100z" fill="#fff"/>`)}</div>
      <div class="search">
        ${pic(16, 17, svg`<circle cx="10" cy="6" r="5.300" stroke="#222" stroke-width="1.300"/><path d="M6.200 9.800L.6 16" stroke="#222" stroke-width="1.300"/>`)}
        <span>Type here to search</span>
        ${pic(70, 36, svg`
          <path d="M4 9l3-7 5 5 5-6 5 8z" fill="#c73a2c"/><path d="M2 10l10 4v18L2 29z" fill="#1c8069"/><path d="M12 14l10-4v18l-10 4z" fill="#11604f"/><path d="M2 10l10-3 10 3-10 4z" fill="#2a9c80"/>
          <path d="M7 10l2-5 3 4 4-5 1 5" stroke="#d7483a" stroke-width="2"/>
          <path d="M2 15l10 6 10-7M2 21l10 6 10-7M3 27l9 5 10-6" stroke="#d9efe4" stroke-width="2.200"/>
          <path d="M26 12h23l-1 20-10 3-11-3z" fill="#cf3124"/><path d="M24 9h27v6H24z" fill="#e04634"/><path d="M34 9h7v25h-6z" fill="#f2c564"/><path d="M30 15v17M46 15v17" stroke="#a92018" stroke-width="2"/>
          <path d="M37 9C30 0 24 1 27 6M38 9c7-9 13-8 10-3" stroke="#f0c060" stroke-width="3.500"/>
          <path d="M53 19h14v10l-7 4-7-3z" fill="#9fc0e8"/><path d="M52 16l8-2 8 2v5H52z" fill="#d04a4e"/><path d="M58 19h4v13h-3z" fill="#e06466"/><path d="M60 15c-5-7-8-1-4 0M60 15c5-7 8-1 4 0" stroke="#c93337" stroke-width="2"/>
        `)}
      </div>
      <div class="buttons">
        <div class="cell">${pic(18, 18, svg`<path d="M1.500 1v3.500h10V1M1.500 17v-3.500h10V17M1.500 6.500h10v5h-10zM15.500 1v3M15.500 9v8" stroke="#fff" stroke-width="1.300"/><rect x="14" y="5" width="3" height="3" fill="#fff"/>`)}</div>
        <div class="cell">${pic(24, 24, edgeBody, 48, 48)}</div>
        <div class="cell active">${pic(22, 20, svg`<path d="M0 1h8l2 2h11v7H0z" fill="#e9a52e"/><path d="M0 5h22v14H0z" fill="#fed366"/><path d="M4 19v-6c0-1 .5-2 2-2h10c1.500 0 2 1 2 2v6h-4v-4H8v4z" fill="#3f8fcf"/>`)}</div>
        <div class="cell">${pic(24, 24, firefoxBody, 48, 48)}</div>
      </div>
      <div class="tray">
        ${pic(95, 20, svg`
          <g stroke="#fff" stroke-width="1.200">
            <path d="M4 12.500l5.500-5.500 5.500 5.500"/>
            <rect x="29" y="6.500" width="7" height="7" rx="1"/><path d="M36 9l3-2v6l-3-2M30 4c2-2 6-2 8 0M30 16c2 2 6 2 8 0"/>
            <path d="M49.500 7.500h3l3.500-3v11l-3.500-3h-3zM58.500 7.500c1 1.500 1 3.500 0 5M60.800 5.500c2 2.500 2 6.500 0 9M63 4c3 3 3 9 0 12"/>
            <path d="M79 5.500h10v8H76v-5M82.500 13.500v3M79 16.500h7M74.500 3.500h4v4h-4zM76.500 7.500v6"/>
          </g>
        `)}
        <div class="clock">3:18 PM<br>4/23/2026</div>
        ${pic(16, 16, svg`<path d="M.6 1.600h14.800v10.500H10L8 14.500l-2-2.400H.6z" stroke="#fff" stroke-width="1.200"/>`)}
        <div class="peek"></div>
      </div>
    `
  }
}

/* ---------- root ---------- */

const ICONS: [string, unknown, boolean?][] = [
  ['Recycle Bin', recycleBin],
  ['CCleaner', ccleaner],
  ['Adobe\nAcrobat', acrobat],
  ['Firefox', pic(48, 48, svg`${firefoxBody}${shortcut}`)],
  ['everyout.png', imageFile],
  ['Google\nChrome', chrome],
  ['VLC media\nplayer', vlc],
  ['bedabove.rtf', wordFile],
  ['Microsoft\nEdge', pic(48, 48, svg`${edgeBody}${shortcut}`)],
  ['comesvote...', imageFile],
  ['esteach.rtf', wordFile],
  ['grandcase...', imageFile],
  ['porttemper...', imageFile],
  ['taxcosts.rtf', wordFile],
  ['wallrequir...', imageFile],
  ['week', wordFile, true],
  ['whyi', wordFile, true]
]

@customElement('app-root')
export class AppRoot extends LitElement {
  static styles = css`
    :host {
      position: relative;
      display: flex;
      flex-direction: column;
      width: 1360px;
      height: 768px;
      overflow: hidden;
      background:
        linear-gradient(14deg, transparent 72.700%, rgba(130, 215, 255, .16) 73%, transparent 73.400%),
        linear-gradient(97deg, #00a6fc 0, #00b0ff 14%, #00a4f6 30%, #048ae8 44%, #0376dc 54%, #0560d0 68%, #084ec6 78%, #0442ba 88%, #0440b8 100%);
    }

    .icons {
      flex: 1;
      display: grid;
      grid-auto-flow: column;
      grid-template-rows: repeat(7, 99px);
      grid-auto-columns: 74.500px;
    }

    /* the window and the watermark float over the desktop */
    explorer-window {
      position: absolute;
      left: 179px;
      top: 93px;
      width: 1125px;
      height: 593px;
    }

    .watermark {
      position: absolute;
      left: 1110px;
      top: 650px;
      filter: drop-shadow(0 0 1.500px rgba(90, 100, 120, .65));
      opacity: .55;
    }
  `

  render () {
    return html`
      <div class="icons">
        ${ICONS.map(([label, icon, covered]) => html`<desktop-icon .icon=${icon} label=${label} ?covered=${covered}></desktop-icon>`)}
      </div>
      <explorer-window></explorer-window>
      <task-bar></task-bar>
      <svg class="watermark" width="210" height="75" viewBox="0 0 210 75" fill="none">
        <g font-family="Roboto, sans-serif" font-size="51" fill="#fff" stroke="#fff" stroke-width=".8">
          <text x="9" y="57.500" textLength="69" lengthAdjust="spacingAndGlyphs">ANY</text>
          <text x="139" y="57.500" textLength="63" lengthAdjust="spacingAndGlyphs">RUN</text>
        </g>
        <path d="M93 47V12l37 26-35 20" stroke="#fff" stroke-width="5" stroke-linejoin="round"/>
        <path d="M88 17l-6 4v42l8-4 34-19M93 61v6l38-21" stroke="#fff" stroke-width="4" stroke-linejoin="round"/>
      </svg>
    `
  }
}
